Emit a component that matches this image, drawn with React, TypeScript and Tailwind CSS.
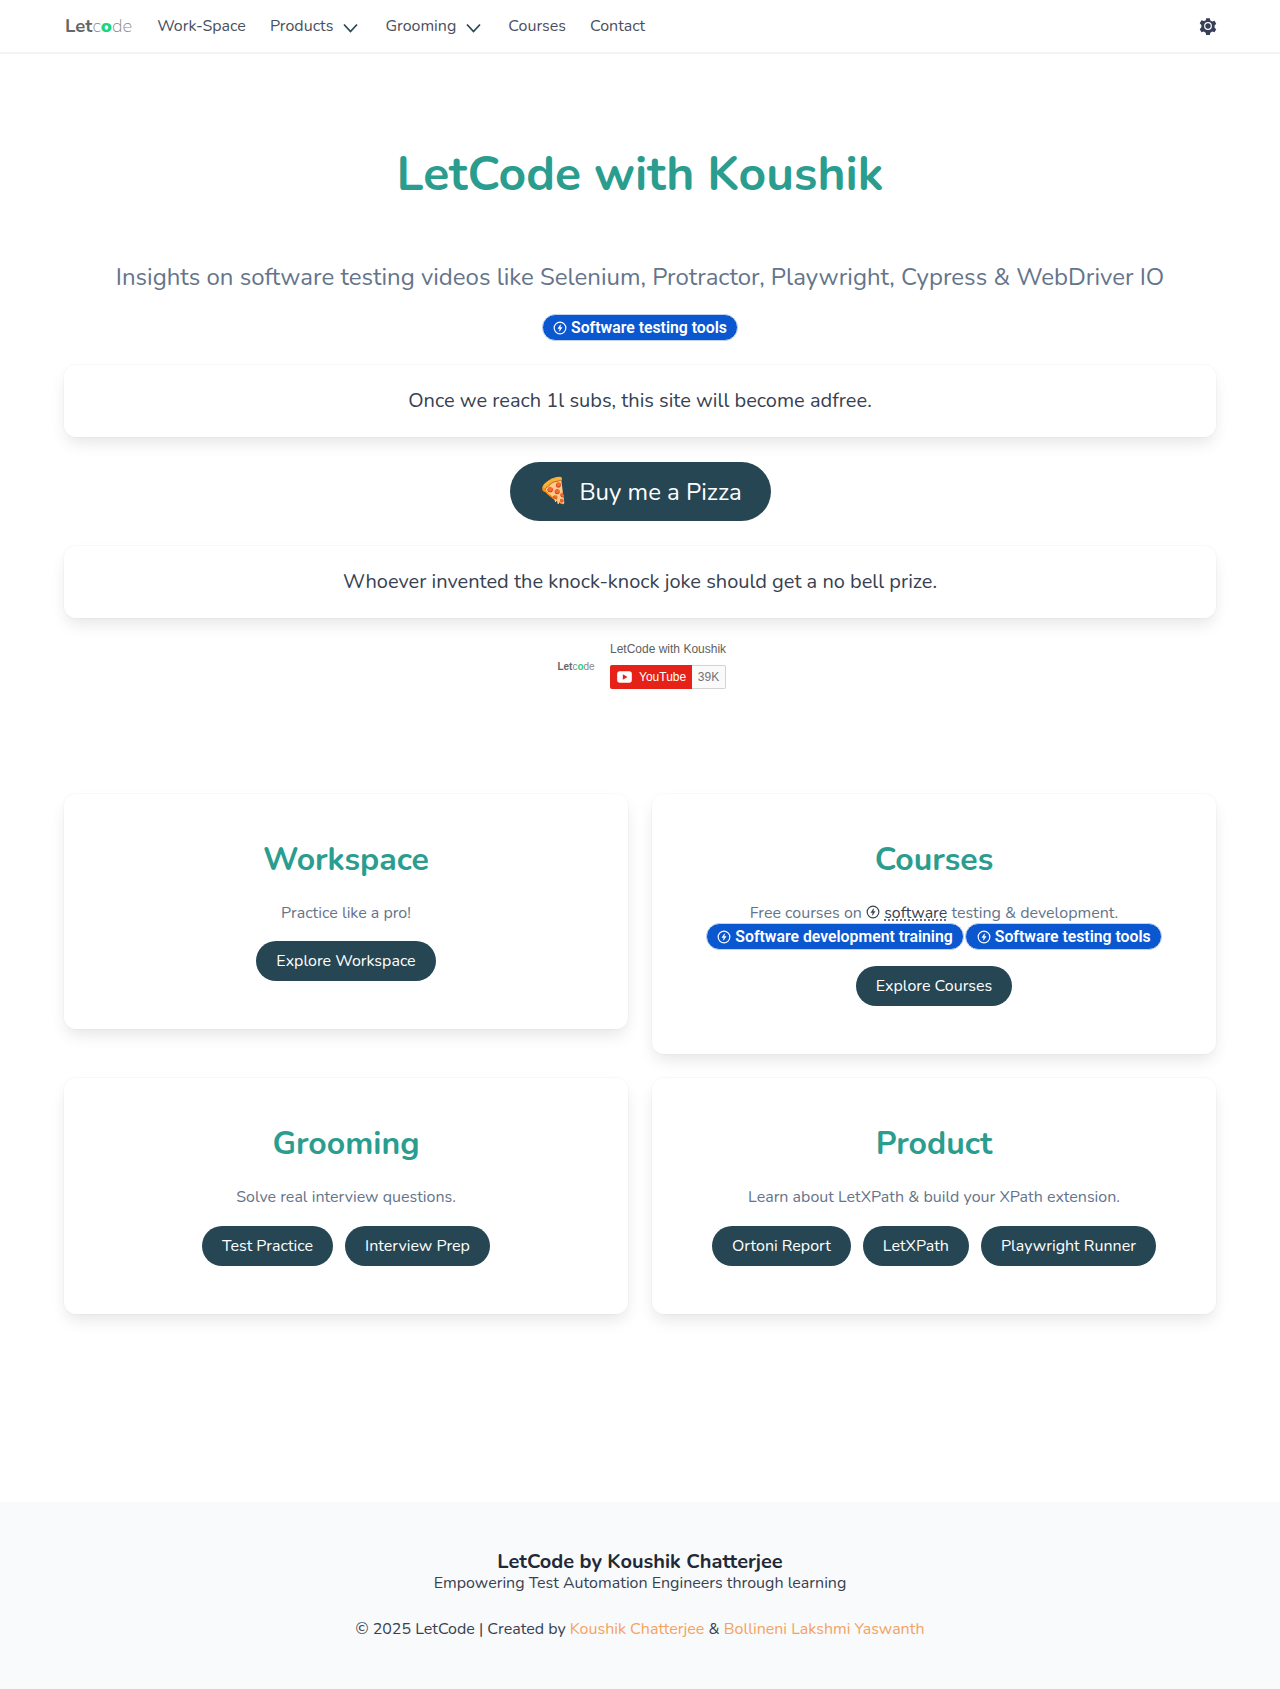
function Bolt({ className }: { className?: string }) {
  return (
    <svg viewBox="0 0 24 24" fill="none" stroke="currentColor" strokeWidth="2" className={className}>
      <circle cx="12" cy="12" r="10" />
      <path d="M13 6.500 8.500 13H12l-1 4.500 4.500-6.500H12z" fill="currentColor" strokeWidth="1" strokeLinejoin="round" />
    </svg>
  );
}

function Gear() {
  return (
    <svg viewBox="0 0 24 24" className="h-[18px] w-[18px] text-[#363f57]" fill="currentColor">
      <path
        fillRule="evenodd"
        d="M9.600 1.500h4.800l.7 3 2.600 1.500 3-.9 2.300 4-2.200 2.100v3l2.200 2.100-2.300 4-3-.9-2.600 1.500-.7 3H9.600l-.7-3-2.600-1.500-3 .9-2.300-4L3.200 13.500v-3L1 8.400l2.300-4 3 .9L8.900 4.500zM12 6.800a5.200 5.200 0 1 0 0 10.400 5.200 5.200 0 0 0 0-10.400z"
      />
      <circle cx="12" cy="12" r="3.600" />
    </svg>
  );
}

function Logo({ small }: { small?: boolean }) {
  return (
    <span className={small ? 'flex items-center text-[10px] leading-none' : 'flex items-center text-[18.500px] leading-none'}>
      <span className="font-bold text-[#666]">Let</span>
      <span className="font-extralight text-[#888]">c</span>
      <span className="font-black text-[#1dd47f]">o</span>
      <span className="font-extralight text-[#888]">de</span>
    </span>
  );
}

function Badge({ label }: { label: string }) {
  return (
    <span className="inline-flex h-[27px] items-center gap-[4px] rounded-full border border-[#c3d4f2] bg-[#0b57d0] px-[10.500px] font-['Roboto',sans-serif] text-[15.800px] leading-none font-semibold whitespace-nowrap text-white">
      <Bolt className="mt-[1px] h-[14px] w-[14px]" />
      {label}
    </span>
  );
}

function Pill({ label }: { label: string }) {
  return (
    <button className="h-10 rounded-full bg-[#264653] px-5 text-[16px] whitespace-nowrap text-white">{label}</button>
  );
}

function Card({ title, children }: { title: string; children: React.ReactNode }) {
  return (
    <div className="rounded-xl bg-white px-6 pt-[45px] pb-12 text-center shadow-[0_8px_16px_-2px_rgba(10,10,10,0.1),0_0_0_1px_rgba(10,10,10,0.02)]">
      <h2 className="text-[32px] leading-[41px] font-bold text-[#2a9d8f]">{title}</h2>
      {children}
    </div>
  );
}

function NavItem({ label, menu }: { label: string; menu?: boolean }) {
  return (
    <a className="flex items-center px-3 text-[16px] text-[#4a4f5c]">
      {label}
      {menu && (
        <svg viewBox="0 0 15 10" className="mt-[3px] mr-[3px] ml-[10px] h-[10px] w-[15px] text-[#264653]" fill="none" stroke="currentColor" strokeWidth="1.700">
          <path d="M1 1.500 7.500 8.500 14 1.500" />
        </svg>
      )}
    </a>
  );
}

export default function App() {
  return (
    <div className="min-h-[1689px] bg-white font-['Nunito','Lato',sans-serif] text-[#374151]">
      <nav className="flex h-[54px] items-center border-b-2 border-[#f3f3f3] pr-[64px] pl-[65px]">
        <Logo />
        <div className="ml-[13px] flex">
          <NavItem label="Work-Space" />
          <NavItem label="Products" menu />
          <NavItem label="Grooming" menu />
          <NavItem label="Courses" />
          <NavItem label="Contact" />
        </div>
        <div className="mr-[-1px] ml-auto flex">
          <Gear />
        </div>
      </nav>

      <main className="px-16 pt-[90px]">
        <h1 className="text-center text-[48px] leading-[60px] font-bold text-[#2a9d8f]">LetCode with Koushik</h1>
        <p className="mt-[55px] text-center text-[24px] leading-[36px] text-[#64748b]">
          Insights on software testing videos like Selenium, Protractor, Playwright, Cypress &amp; WebDriver IO
        </p>
        <div className="mt-[19px] flex justify-center">
          <Badge label="Software testing tools" />
        </div>

        <div className="mt-[24px] rounded-xl bg-white py-5 text-center text-[20px] leading-[32px] shadow-[0_8px_16px_-2px_rgba(10,10,10,0.1),0_0_0_1px_rgba(10,10,10,0.02)]">
          Once we reach 1l subs, this site will become adfree.
        </div>
        <div className="mt-[25px] flex justify-center">
          <button className="flex h-[59px] w-[261px] items-center justify-center gap-[10px] rounded-full bg-[#264653] text-[24px] text-white">
            <span className="text-[25px] leading-none">🍕</span>Buy me a Pizza
          </button>
        </div>
        <div className="mt-[25px] rounded-xl bg-white py-5 text-center text-[20px] leading-[32px] shadow-[0_8px_16px_-2px_rgba(10,10,10,0.1),0_0_0_1px_rgba(10,10,10,0.02)]">
          Whoever invented the knock-knock joke should get a no bell prize.
        </div>

        <div className="mt-[21px] flex justify-center font-['Liberation_Sans',sans-serif]">
          <div className="flex h-[52px] w-[168px] items-center">
            <div className="mt-[4px] flex w-[54px] shrink-0 justify-center pr-[14px]">
              <Logo small />
            </div>
            <div>
              <div className="text-[12px] leading-[16px] whitespace-nowrap text-[#606060]">LetCode with Koushik</div>
              <div className="mt-[8px] flex h-[24px] text-[12px]">
                <div className="flex w-[82px] items-center rounded-l-[2px] bg-[#e62117] pl-[6px] text-white">
                  <svg viewBox="0 0 24 24" className="mr-[6px] h-[16px] w-[17px]" fill="white">
                    <rect x="1" y="3.500" width="22" height="17" rx="4" />
                    <path d="M9.500 8v8l7-4z" fill="#e62117" />
                  </svg>
                  YouTube
                </div>
                <div className="flex w-[34px] items-center justify-center rounded-r-[2px] border border-l-0 border-[#d3d3d3] bg-[#fafafa] text-[#737373]">
                  39K
                </div>
              </div>
            </div>
          </div>
        </div>

        <div className="mt-[103px] grid grid-cols-2 items-start gap-x-6 gap-y-6">
          <Card title="Workspace">
            <p className="mt-[21px] text-[16px] leading-[24px] text-[#64748b]">Practice like a pro!</p>
            <div className="mt-[16px] flex justify-center">
              <Pill label="Explore Workspace" />
            </div>
          </Card>
          <Card title="Courses">
            <p className="mt-[21px] text-[16px] leading-[24px] text-[#64748b]">
              Free courses on <Bolt className="inline h-[14px] w-[14px] align-[-1px] text-[#374151]" />{' '}
              <span className="text-[#374151] underline decoration-dotted underline-offset-2">software</span> testing &amp; development.
            </p>
            <div className="-mt-[2px] flex justify-center gap-[1px]">
              <Badge label="Software development training" />
              <Badge label="Software testing tools" />
            </div>
            <div className="mt-[16px] flex justify-center">
              <Pill label="Explore Courses" />
            </div>
          </Card>
          <Card title="Grooming">
            <p className="mt-[21px] text-[16px] leading-[24px] text-[#64748b]">Solve real interview questions.</p>
            <div className="mt-[17px] flex justify-center gap-3">
              <Pill label="Test Practice" />
              <Pill label="Interview Prep" />
            </div>
          </Card>
          <Card title="Product">
            <p className="mt-[21px] text-[16px] leading-[24px] text-[#64748b]">Learn about LetXPath &amp; build your XPath extension.</p>
            <div className="mt-[17px] flex justify-center gap-3">
              <Pill label="Ortoni Report" />
              <Pill label="LetXPath" />
              <Pill label="Playwright Runner" />
            </div>
          </Card>
        </div>
      </main>

      <footer className="mt-[188px] h-[190px] bg-[#f9fafb] pt-[49px] text-center">
        <div className="text-[20px] leading-[22px] font-bold text-[#1f2937]">LetCode by Koushik Chatterjee</div>
        <div className="text-[16px] leading-[20px] text-[#374151]">Empowering Test Automation Engineers through learning</div>
        <div className="mt-[24px] text-[16px] leading-[24px] text-[#374151]">
          © 2025 LetCode | Created by <span className="text-[#f4a261]">Koushik Chatterjee</span> &amp;{' '}
          <span className="text-[#f4a261]">Bollineni Lakshmi Yaswanth</span>
        </div>
      </footer>
    </div>
  );
}
